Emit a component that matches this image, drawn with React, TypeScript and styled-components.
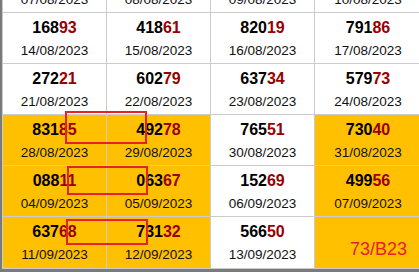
import React from "react";
import styled, { createGlobalStyle } from "styled-components";

interface Draw {
	num?: string;
	date?: string;
	hot?: boolean;
	note?: string;
	mark?: { top: number; left: number; width: number; height: number };
}

const rows: Draw[][] = [
	[{ date: "07/08/2023" }, { date: "08/08/2023" }, { date: "09/08/2023" }, { date: "10/08/2023" }],
	[
		{ num: "16893", date: "14/08/2023" },
		{ num: "41861", date: "15/08/2023" },
		{ num: "82019", date: "16/08/2023" },
		{ num: "79186", date: "17/08/2023" },
	],
	[
		{ num: "27221", date: "21/08/2023" },
		{ num: "60279", date: "22/08/2023" },
		{ num: "63734", date: "23/08/2023" },
		{ num: "57973", date: "24/08/2023" },
	],
	[
		{ num: "83185", date: "28/08/2023", hot: true, mark: { top: -4, left: 62, width: 82, height: 33 } },
		{ num: "49278", date: "29/08/2023", hot: true },
		{ num: "76551", date: "30/08/2023" },
		{ num: "73040", date: "31/08/2023", hot: true },
	],
	[
		{ num: "08811", date: "04/09/2023", hot: true, mark: { top: 0, left: 64, width: 81, height: 29 } },
		{ num: "06367", date: "05/09/2023", hot: true },
		{ num: "15269", date: "06/09/2023" },
		{ num: "49956", date: "07/09/2023", hot: true },
	],
	[
		{ num: "63768", date: "11/09/2023", hot: true, mark: { top: 2, left: 63, width: 82, height: 26 } },
		{ num: "73132", date: "12/09/2023", hot: true },
		{ num: "56650", date: "13/09/2023" },
		{ hot: true, note: "73/B23" },
	],
];

const App: React.FC = () => {
	return (
		<>
			<GlobalStyle />
			<Page>
				<Grid>
					{rows.flat().map((d, i) => (
						<Cell key={i} $hot={!!d.hot}>
							{d.note ? (
								<Note>{d.note}</Note>
							) : (
								<>
									<Num>
										{d.num ? d.num.slice(0, 3) : "\u00a0"}
										<Tail>{d.num ? d.num.slice(3) : ""}</Tail>
									</Num>
									<DateText>{d.date}</DateText>
								</>
							)}
							{d.mark && (
								<Mark
									style={{
										top: d.mark.top,
										left: d.mark.left,
										width: d.mark.width,
										height: d.mark.height,
									}}
								/>
							)}
						</Cell>
					))}
				</Grid>
			</Page>
		</>
	);
};

const GlobalStyle = createGlobalStyle`
	html, body {
		margin: 0;
		padding: 0;
		background: #7a7a7a;
		overflow: hidden;
	}
	body {
		font-family: "Liberation Sans", Arial, sans-serif;
	}
`;

const Page = styled.div`
	width: 419px;
	height: 269px;
	padding-left: 2px;
	box-sizing: border-box;
	overflow: hidden;
`;

const Grid = styled.div`
	display: grid;
	grid-template-columns: repeat(3, 103px) 106px;
	grid-template-rows: repeat(5, 50px) 51px;
	gap: 1px;
	padding: 1px;
	background: #cbcbcb;
	width: max-content;
	margin-top: -39px;
`;

const Cell = styled.div<{ $hot: boolean }>`
	position: relative;
	display: flex;
	flex-direction: column;
	align-items: center;
	padding-top: 6px;
	box-sizing: border-box;
	background: ${({ $hot }) => ($hot ? "#ffc000" : "#ffffff")};
`;

const Num = styled.div`
	font-size: 16px;
	font-weight: bold;
	line-height: 18px;
	color: #000;
`;

const Tail = styled.span`
	color: #990000;
`;

const DateText = styled.div`
	margin-top: 6px;
	font-size: 13.5px;
	line-height: 16px;
	color: #111;
`;

const Note = styled.div`
	align-self: stretch;
	padding: 16px 0 0 35px;
	font-size: 18px;
	line-height: 20px;
	color: #e8202a;
`;

const Mark = styled.div`
	position: absolute;
	box-sizing: border-box;
	border: 2px solid #e5222b;
	z-index: 2;
`;

export default App;
